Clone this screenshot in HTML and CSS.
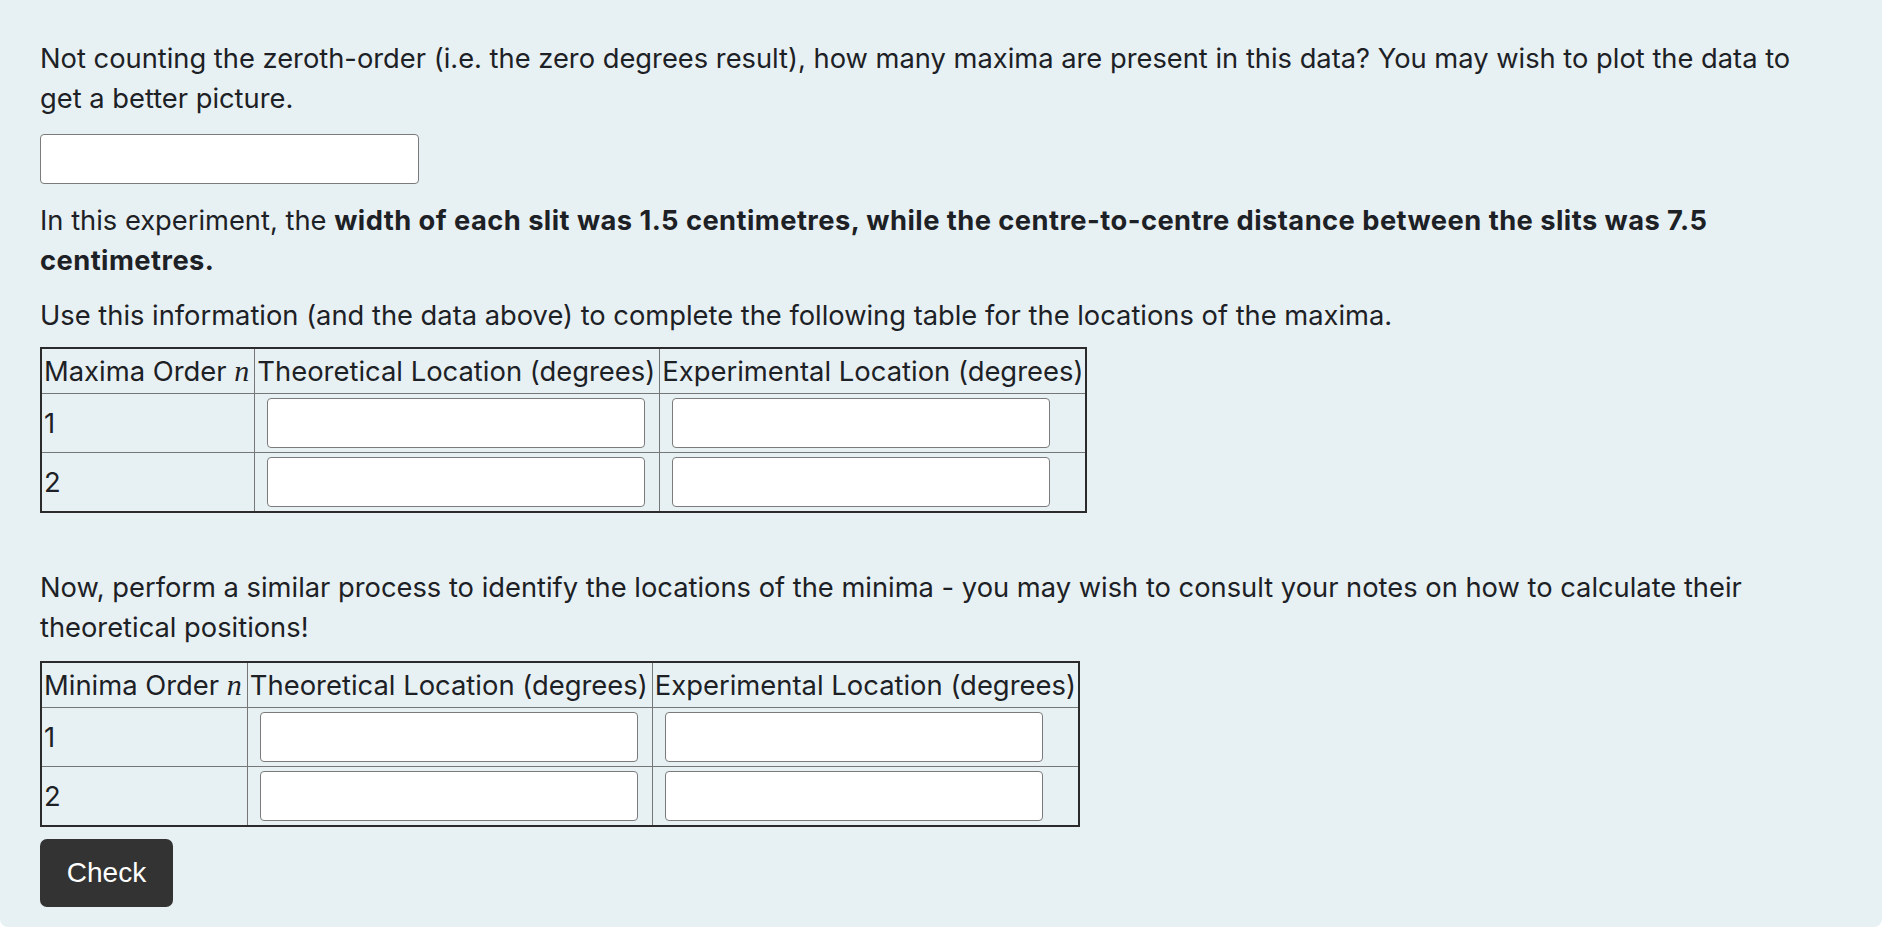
FILE: index.html
```html
<!DOCTYPE html>
<html>
<head>
<meta charset="utf-8">
<link rel="stylesheet" href="styles.css">
</head>
<body>
<div class="que">
  <p class="para">Not counting the zeroth-order (i.e. the zero degrees result), how many maxima are present in this data? You may wish to plot the data to get a better picture.</p>
  <div class="answer-line"><input class="ans ans-wide" type="text"></div>
  <p class="para">In this experiment, the <strong>width of each slit was 1.5 centimetres, while the centre-to-centre distance between the slits was 7.5 centimetres.</strong></p>
  <p class="para before-table">Use this information (and the data above) to complete the following table for the locations of the maxima.</p>
  <table class="grid">
    <tr><th>Maxima Order <span class="math">n</span></th><th>Theoretical Location (degrees)</th><th>Experimental Location (degrees)</th></tr>
    <tr><td class="num">1</td><td><input class="ans" type="text"></td><td><input class="ans" type="text"></td></tr>
    <tr><td class="num">2</td><td><input class="ans" type="text"></td><td><input class="ans" type="text"></td></tr>
  </table>
  <p class="para spaced">Now, perform a similar process to identify the locations of the minima - you may wish to consult your notes on how to calculate their theoretical positions!</p>
  <table class="grid">
    <tr><th>Minima Order <span class="math">n</span></th><th>Theoretical Location (degrees)</th><th>Experimental Location (degrees)</th></tr>
    <tr><td class="num">1</td><td><input class="ans" type="text"></td><td><input class="ans" type="text"></td></tr>
    <tr><td class="num">2</td><td><input class="ans" type="text"></td><td><input class="ans" type="text"></td></tr>
  </table>
  <div class="actions"><button class="check" type="button">Check</button></div>
</div>
</body>
</html>
```
FILE: styles.css
```css
html, body {
  margin: 0;
  padding: 0;
  background: #ffffff;
}
body {
  font-family: Inter, "Noto Sans", sans-serif;
  color: #1d2125;
}
.que {
  width: 1882px;
  box-sizing: border-box;
  min-height: 926px;
  background: #e7f1f4;
  border-radius: 0 0 8px 8px;
  padding: 39px 40px 20px 40px;
}
.para {
  margin: 0 0 15px 0;
  font-size: 27.3px;
  line-height: 40px;
  max-width: 1782px;
}
.para strong { font-weight: 700; letter-spacing: 0.45px; }
.before-table { margin-bottom: 11px; }
.spaced { margin-top: 55px; margin-bottom: 13px; }
.answer-line { margin: 0 0 17px 0; display: flex; }
.ans {
  box-sizing: border-box;
  width: 379px;
  height: 50px;
  border: 1.5px solid #7b7b7b;
  border-radius: 4px;
  background: #ffffff;
  margin: 0;
  padding: 0;
  display: block;
}
.grid {
  border-collapse: collapse;
  border: 2px solid #2b2b2b;
  margin-bottom: 12px;
  font-size: 27.4px;
}
.grid th, .grid td {
  border: 1.5px solid #777777;
  padding: 2px 2px;
  text-align: left;
  font-weight: 400;
  white-space: nowrap;
}
.grid th { height: 40px; line-height: 32px; }
.grid td { height: 54px; }
.grid td .ans { margin: 0 12px 0 10px; width: 378px; }
.math {
  font-family: "Liberation Serif", "DejaVu Serif", serif;
  font-style: italic;
  font-size: 30px;
  margin-right: 3px;
}
.actions { display: flex; }
.check {
  background: #333333;
  color: #ffffff;
  border: none;
  border-radius: 7px;
  width: 133px;
  height: 68px;
  font-family: "Liberation Sans", Arial, sans-serif;
  font-size: 28px;
  padding: 0;
}
```
